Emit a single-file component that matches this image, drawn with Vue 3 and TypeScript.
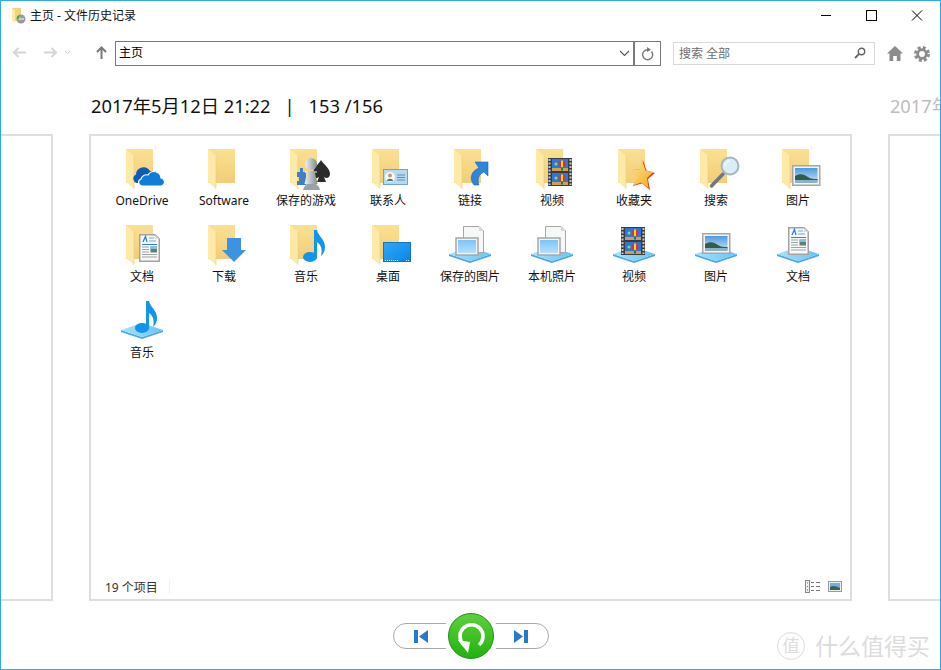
<script setup lang="ts">
// File History window: one restore point with a grid of library folders.
interface Item {
  label: string
  icon: string
  kind: 'folder' | 'library'
}

const items: Item[] = [
  { label: 'OneDrive', icon: 'cloud', kind: 'folder' },
  { label: 'Software', icon: '', kind: 'folder' },
  { label: '保存的游戏', icon: 'game', kind: 'folder' },
  { label: '联系人', icon: 'contact', kind: 'folder' },
  { label: '链接', icon: 'link', kind: 'folder' },
  { label: '视频', icon: 'film-f', kind: 'folder' },
  { label: '收藏夹', icon: 'star', kind: 'folder' },
  { label: '搜索', icon: 'lens', kind: 'folder' },
  { label: '图片', icon: 'pic-f', kind: 'folder' },
  { label: '文档', icon: 'doc-f', kind: 'folder' },
  { label: '下载', icon: 'down', kind: 'folder' },
  { label: '音乐', icon: 'note-f', kind: 'folder' },
  { label: '桌面', icon: 'desk', kind: 'folder' },
  { label: '保存的图片', icon: 'saved', kind: 'library' },
  { label: '本机照片', icon: 'saved', kind: 'library' },
  { label: '视频', icon: 'film-l', kind: 'library' },
  { label: '图片', icon: 'pic-l', kind: 'library' },
  { label: '文档', icon: 'doc-l', kind: 'library' },
  { label: '音乐', icon: 'note-l', kind: 'library' },
]
</script>

<template>
  <div class="window">
    <svg class="sprite" aria-hidden="true">
      <defs>
        <linearGradient id="fb" x1="0" y1="0" x2="0" y2="1">
          <stop offset="0" stop-color="#fae093" />
          <stop offset="1" stop-color="#f2cd78" />
        </linearGradient>
        <linearGradient id="plat" x1="0" y1="0" x2="1" y2="0">
          <stop offset="0" stop-color="#a8e2fc" />
          <stop offset="1" stop-color="#68c2f6" />
        </linearGradient>
        <linearGradient id="sky" x1="0" y1="0" x2="0" y2="1">
          <stop offset="0" stop-color="#4d9ae0" />
          <stop offset="1" stop-color="#cfe6f4" />
        </linearGradient>
        <linearGradient id="screen" x1="0" y1="0" x2="1" y2="1">
          <stop offset="0" stop-color="#2fa9f8" />
          <stop offset="1" stop-color="#0a84e6" />
        </linearGradient>
        <linearGradient id="photo" x1="0" y1="0" x2="0" y2="1">
          <stop offset="0" stop-color="#7cc4f8" />
          <stop offset="1" stop-color="#b6defc" />
        </linearGradient>
        <linearGradient id="gold" x1="0" y1="0" x2="1" y2="1">
          <stop offset="0" stop-color="#fde48f" />
          <stop offset="1" stop-color="#f5a623" />
        </linearGradient>
        <linearGradient id="pawn" x1="0" y1="0" x2="1" y2="0">
          <stop offset="0" stop-color="#eef1f2" />
          <stop offset="1" stop-color="#7e8b91" />
        </linearGradient>

        <g id="folder">
          <path d="M8 3H35V37H8Z" fill="url(#fb)" />
          <path d="M8 3L16 10V43L8 36Z" fill="#fdeaa8" />
          <path d="M16 10V43" stroke="#eccb7c" stroke-width=".6" />
        </g>

        <g id="cloud">
          <path d="M20 37a4.500 4.500 0 0 1-2-8.600a7.500 7.500 0 0 1 14-3.400h6v12Z" fill="#0a5cb8" />
          <path d="M24 40h18a4 4 0 0 0 1-8a7 7 0 0 0-13-3a5.500 5.500 0 0 0-7 4a3.600 3.600 0 0 0 1 7Z" fill="#0f7cdc" stroke="#fff" stroke-width="1.200" />
        </g>

        <g id="game">
          <path d="M15 26h3v-4h3v4h3v13h-9v-4h2v-4h-2Z" fill="#3f7fc4" />
          <path d="M39 14c2 4 9 8 9 14c0 4-4 5-6 3l2 5h-9l2-5c-2 2-6 1-6-3c0-6 6-10 8-14Z" fill="#2c2c2c" />
          <circle cx="29" cy="18" r="6" fill="url(#pawn)" />
          <path d="M23 25h12v2h-2l2.500 11h-13l2.500-11h-2Z" fill="url(#pawn)" />
          <path d="M21 44l1-3l3-3h9l3 3l1 3Z" fill="#97a3a9" />
        </g>

        <g id="contact">
          <rect x="19.500" y="23.500" width="24" height="15" fill="#b5daf0" stroke="#6ba6cc" />
          <circle cx="26" cy="31" r="5" fill="#f7f7f7" />
          <circle cx="26" cy="29.500" r="2" fill="#c89878" />
          <path d="M23 35c0-3 6-3 6 0Z" fill="#3f8060" />
          <path d="M33 29h8M33 31.500h8M33 34h8" stroke="#5f8fb0" />
        </g>

        <g id="link">
          <path d="M28 39C23 33 25 25 33 22L29 16H42V30L38 26C33 28 31 33 33 39Z" fill="#2f86d8" stroke="#1d65ae" stroke-width=".6" />
        </g>

        <g id="film">
          <rect width="24" height="28" fill="#3c3c3c" />
          <path d="M1.500 1v26M22.500 1v26" stroke="#c9c9c9" stroke-width="2" stroke-dasharray="2 1.500" />
          <rect x="4" y="1" width="16" height="12" fill="#2c78d8" />
          <rect x="4" y="15" width="16" height="12" fill="#2c78d8" />
          <rect x="4" y="10" width="16" height="3" fill="#c7a05e" />
          <rect x="4" y="24" width="16" height="3" fill="#c7a05e" />
          <circle cx="14" cy="6" r="3.500" fill="#d8332c" />
          <path d="M14 2.500v7" stroke="#f4d03a" stroke-width="2" />
          <path d="M14 9.500v3" stroke="#1f7a45" stroke-width="2" />
          <circle cx="14" cy="20" r="3.500" fill="#d8332c" />
          <path d="M14 16.500v7" stroke="#f4d03a" stroke-width="2" />
          <path d="M14 23.500v3" stroke="#1f7a45" stroke-width="2" />
          <circle cx="8" cy="6" r="1.500" fill="#8fd47a" />
          <circle cx="8" cy="20" r="1.500" fill="#8fd47a" />
        </g>
        <use id="film-f" href="#film" x="20" y="12" />
        <use id="film-l" href="#film" x="11" y="5" />

        <g id="star">
          <path d="M33 14l3.500 10.500L45 27l-7 6l2 11l-8-6.500l-9 2.500l4.500-9.500L22 24l8.500-.5Z" fill="#d9471a" />
          <path d="M32 14l3.500 10.500L43 26l-6 6l1.500 10L31 36.500l-8 3l3.500-9L22 24l7.500-.5Z" fill="url(#gold)" />
        </g>

        <g id="lens">
          <path d="M19.500 40L31 28" stroke="#71787d" stroke-width="3.500" stroke-linecap="round" />
          <circle cx="38" cy="20" r="8.500" fill="#d9eef8" stroke="#a6b6bf" stroke-width="2" />
          <path d="M33 20a5 5 0 0 1 5-5" stroke="#fff" fill="none" />
        </g>

        <g id="pic">
          <rect x=".75" y=".75" width="27" height="19.500" fill="#f4f4f4" stroke="#a6a6a6" stroke-width="1.500" />
          <rect x="3" y="3" width="22.500" height="15" fill="url(#sky)" />
          <path d="M3 11c5-3 9-2 13 1c3 2 6 2 9.500 2v2H3Z" fill="#2f5f4c" />
          <rect x="3" y="15" width="22.500" height="3" fill="#8cb2c8" />
        </g>
        <use id="pic-f" href="#pic" x="18" y="19" />
        <use id="pic-l" href="#pic" x="10" y="11" />

        <g id="doc">
          <path d="M.75 .75H16L20.250 5V27.250H.75Z" fill="#f8f8f8" stroke="#a3a3a3" stroke-width="1.500" />
          <path d="M16 .75V5H20.250Z" fill="#dcdcdc" />
          <path d="M4 8l2.500-5.500L8 8" fill="none" stroke="#2a86d6" stroke-width="1.300" />
          <path d="M10 4h5M10 7h7" stroke="#6ba9e0" />
          <path d="M3 10.500h15" stroke="#2a86d6" />
          <path d="M3 13h7M3 15.500h7M3 18h7M3 20.500h15M3 23h15" stroke="#9aa4aa" />
          <rect x="11.500" y="12.500" width="6.500" height="6" fill="#58836f" />
          <rect x="11.500" y="12.500" width="6.500" height="2.500" fill="#86bde6" />
        </g>
        <use id="doc-f" href="#doc" x="21" y="12" />
        <use id="doc-l" href="#doc" x="14" y="5" />

        <path id="down" d="M27 16H41V28H46L34 40L22 28H27Z" fill="#3d93e2" />

        <g id="note">
          <ellipse cx="28" cy="35" rx="7" ry="5" fill="#0f96ea" />
          <path d="M32 36V8h3c1 6 8 9 8 17c0 4-1.500 7-4 9c1-4 1-8-1-11c-1-1.500-2-2.500-3-3V36Z" fill="#0f96ea" />
        </g>
        <use id="note-f" href="#note" />
        <use id="note-l" href="#note" x="-4" y="-5" />

        <g id="desk">
          <rect x="19.500" y="20.500" width="27" height="19" fill="url(#screen)" stroke="#1576bd" />
          <path d="M21 38.500h13M42 38.500h3" stroke="#d8f0ff" stroke-dasharray="1 1" />
        </g>

        <g id="platform">
          <path d="M3 32L24 39L45 32V34L24 41L3 34Z" fill="#4aa8ea" />
          <path d="M3 32L24 25L45 32L24 39Z" fill="url(#plat)" />
        </g>

        <g id="saved">
          <path d="M17.500 4.500H33L37.500 9V30.500H17.500Z" fill="#f7f7f7" stroke="#a7a7a7" />
          <path d="M33 4.500V9H37.500Z" fill="#d9d9d9" />
          <rect x="10" y="16" width="22" height="17" fill="#f4f4f4" stroke="#a7a7a7" stroke-width="1.500" />
          <rect x="12" y="18" width="18" height="13" fill="url(#photo)" />
        </g>

        <path id="tb-arrow" d="M1 5.500H13M5.500 1L1 5.500L5.500 10" fill="none" stroke-width="2" />
      </defs>
    </svg>

    <header class="titlebar">
      <svg class="title-icon" width="15" height="16" viewBox="0 0 15 16">
        <path d="M1 0H10V13H1Z" fill="#f3d27f" />
        <path d="M1 0L4 2V15L1 13Z" fill="#fdeaa8" />
        <circle cx="10" cy="11" r="4.500" fill="#9a9a9a" />
        <path d="M7 11h6M7 11l2-2" stroke="#fff" stroke-width="1.200" fill="none" />
        <path d="M5.500 10.500a4.500 4.500 0 0 1 3-3.500v4Z" fill="#35a84a" />
      </svg>
      <span class="title-text">主页 - 文件历史记录</span>
      <div class="controls">
        <svg width="12" height="12" viewBox="0 0 12 12"><path d="M1 5.500H11" stroke="#000" /></svg>
        <svg width="12" height="12" viewBox="0 0 12 12"><rect x=".5" y=".5" width="10" height="10" fill="none" stroke="#000" /></svg>
        <svg width="12" height="12" viewBox="0 0 12 12"><path d="M1 .5L11 10.500M11 .5L1 10.500" stroke="#000" /></svg>
      </div>
    </header>

    <nav class="toolbar">
      <div class="nav-btns">
        <svg class="nav-back" width="14" height="11" viewBox="0 0 14 11"><use href="#tb-arrow" stroke="#d6d6d6" /></svg>
        <svg class="nav-fwd" width="14" height="11" viewBox="0 0 14 11"><use href="#tb-arrow" stroke="#d6d6d6" transform="matrix(-1 0 0 1 14 0)" /></svg>
        <svg class="nav-drop" width="7" height="5" viewBox="0 0 7 5"><path d="M1 1L3.500 3.500L6 1" fill="none" stroke="#d0d0d0" /></svg>
        <svg class="nav-up" width="11" height="13" viewBox="0 0 11 13"><path d="M5.500 13V2M1 6L5.500 1.500L10 6" fill="none" stroke="#7a7a7a" stroke-width="2" /></svg>
      </div>
      <div class="address">
        <span class="address-text">主页</span>
        <svg class="chevron" width="11" height="7" viewBox="0 0 11 7"><path d="M1 1L5.500 5.500L10 1" fill="none" stroke="#555" stroke-width="1.100" /></svg>
        <div class="refresh">
          <svg width="13" height="14" viewBox="0 0 13 14">
            <path d="M10.500 4.500a5 5 0 1 1-3.500-1.800" fill="none" stroke="#767676" stroke-width="1.400" />
            <path d="M6 0L10 2.700L6 5Z" fill="#767676" />
          </svg>
        </div>
      </div>
      <div class="search">
        <span>搜索 全部</span>
        <svg width="12" height="12" viewBox="0 0 12 12">
          <circle cx="7.500" cy="4.500" r="3.200" fill="none" stroke="#666" stroke-width="1.400" />
          <path d="M5 7L1 11" stroke="#666" stroke-width="1.800" />
        </svg>
      </div>
      <svg class="home" width="16" height="15" viewBox="0 0 16 15">
        <path d="M8 0L16 7.500H13.500V15H9.800V10H6.200V15H2.500V7.500H0Z" fill="#8c8c8c" />
      </svg>
      <svg class="gear" width="16" height="16" viewBox="0 0 16 16">
        <circle cx="8" cy="8" r="6.200" fill="none" stroke="#8c8c8c" stroke-width="3.600" stroke-dasharray="2.800 2.070" />
        <circle cx="8" cy="8" r="4.300" fill="none" stroke="#8c8c8c" stroke-width="2.800" />
      </svg>
    </nav>

    <div class="dates">
      <div class="date-current">2017年5月12日 21:22<span class="date-bar">|</span>153 /156</div>
      <div class="date-next">2017年5月</div>
    </div>

    <main class="stage">
      <div class="panel panel-side"></div>
      <section class="panel panel-main">
        <div class="grid">
          <div v-for="(item, i) in items" :key="i" class="cell">
            <svg class="icon" width="48" height="44" viewBox="0 0 48 44">
              <use v-if="item.kind === 'folder'" href="#folder" />
              <use v-else href="#platform" />
              <use v-if="item.icon" :href="'#' + item.icon" />
            </svg>
            <span class="label">{{ item.label }}</span>
          </div>
        </div>
        <footer class="status">
          <span class="count">19 个项目</span>
          <span class="sep"></span>
          <svg class="view-list" width="16" height="13" viewBox="0 0 16 13">
            <rect x=".5" y=".5" width="4" height="12" fill="#eee" stroke="#888" />
            <path d="M2 3h1M2 6.500h1" stroke="#3a7fc0" />
            <path d="M2 10h1" stroke="#c0392b" />
            <path d="M6 2.500h3M11 2.500h4M6 6.500h3M11 6.500h4M6 10.500h3M11 10.500h4" stroke="#777" />
          </svg>
          <svg width="14" height="11" viewBox="0 0 14 11">
            <rect x=".5" y=".5" width="13" height="10" fill="#eee" stroke="#999" />
            <rect x="2" y="2" width="10" height="7" fill="#6db0e6" />
            <path d="M2 6c3-2 6-1 10 1v2H2Z" fill="#3c6455" />
          </svg>
        </footer>
      </section>
      <div class="panel panel-side"></div>
    </main>

    <div class="pager">
      <button class="pill pill-left" type="button">
        <svg width="14" height="13" viewBox="0 0 14 13"><path d="M0 0H4V13H0ZM14 0V13L5 6.500Z" fill="#2a78c8" /></svg>
      </button>
      <button class="restore" type="button">
        <svg width="32" height="36" viewBox="0 0 32 36">
          <path d="M9 27A11.500 11.500 0 1 1 24 27" fill="none" stroke="#fff" stroke-width="3.600" />
          <path d="M3 22L13 35L15 24Z" fill="#fff" />
        </svg>
      </button>
      <button class="pill pill-right" type="button">
        <svg width="14" height="13" viewBox="0 0 14 13"><path d="M14 0H10V13H14ZM0 0V13L9 6.500Z" fill="#2a78c8" /></svg>
      </button>
    </div>

    <div class="watermark">
      <span class="wm-badge">值</span>
      <span>什么值得买</span>
    </div>
  </div>
</template>

<style>
html,
body {
  margin: 0;
  background: #fff;
}
</style>

<style scoped>
.window {
  position: relative;
  box-sizing: border-box;
  width: 941px;
  height: 670px;
  border: 1px solid #2ea8f2;
  background: #fff;
  color: #111;
  display: flex;
  flex-direction: column;
  overflow: hidden;
  font-family: "Noto Sans", "Noto Sans CJK SC", sans-serif;
  font-size: 12px;
}
.sprite {
  position: absolute;
  width: 0;
  height: 0;
}
.titlebar {
  height: 40px;
  flex: none;
  display: flex;
  align-items: flex-start;
  padding: 7px 0 0 10px;
  box-sizing: border-box;
}
.title-text {
  margin-left: 4px;
  line-height: 16px;
}
.controls {
  margin-left: auto;
  margin-top: 2px;
  margin-right: 17px;
  display: flex;
  gap: 33px;
}
.controls svg:first-child {
  margin-right: 1px;
}
.toolbar {
  height: 25px;
  flex: none;
  display: flex;
  align-items: center;
}
.nav-btns {
  width: 114px;
  flex: none;
  display: flex;
  align-items: center;
  padding-bottom: 2px;
  box-sizing: border-box;
}
.nav-back {
  margin-left: 12px;
}
.nav-fwd {
  margin-left: 16px;
}
.nav-drop {
  margin-left: 7px;
}
.nav-up {
  margin-left: 25px;
}
.address {
  width: 546px;
  height: 25px;
  flex: none;
  box-sizing: border-box;
  border: 1px solid #7a7a7a;
  display: flex;
  align-items: center;
  padding-left: 3px;
}
.address-text {
  flex: 1;
  color: #000;
  margin-top: -3px;
}
.chevron {
  margin-right: 3px;
}
.refresh {
  width: 27px;
  height: 100%;
  border-left: 2px solid #7a7a7a;
  display: flex;
  align-items: center;
  justify-content: center;
  box-sizing: border-box;
}
.search {
  margin-left: 12px;
  width: 202px;
  height: 23px;
  box-sizing: border-box;
  border: 1px solid #d9d9d9;
  display: flex;
  align-items: center;
  justify-content: space-between;
  padding: 0 8px 1px 5px;
  color: #6d6d6d;
}
.home {
  margin-left: 12px;
}
.gear {
  margin-left: 11px;
}
.dates {
  height: 68px;
  flex: none;
  display: flex;
  padding: 27px 0 0 90px;
  box-sizing: border-box;
  font-size: 18.300px;
  line-height: 26px;
  white-space: nowrap;
}
.date-bar {
  margin: 0 14px 0 14px;
}
.date-next {
  margin-left: 507px;
  color: #bdbdbd;
}
.stage {
  height: 467px;
  flex: none;
  display: grid;
  grid-template-columns: 52px 763px 1fr;
  column-gap: 36px;
}
.panel {
  box-sizing: border-box;
  border: 2px solid #dedede;
}
.panel-side:first-child {
  border-left: 0;
}
.panel-side:last-child {
  border-right: 0;
}
.panel-main {
  display: flex;
  flex-direction: column;
}
.grid {
  flex: 1;
  display: grid;
  grid-template-columns: repeat(9, 82px);
  grid-auto-rows: 76px;
  align-content: start;
  padding: 10px 0 0 10px;
}
.cell {
  display: flex;
  flex-direction: column;
  align-items: center;
}
.icon {
  display: block;
}
.label {
  line-height: 22px;
  white-space: nowrap;
}
.status {
  height: 24px;
  flex: none;
  display: flex;
  align-items: center;
  box-sizing: border-box;
  padding: 0 8px 1px 14px;
  color: #333;
}
.sep {
  width: 1px;
  height: 14px;
  margin-left: 11px;
  background: #f0f0f0;
}
.view-list {
  margin-left: auto;
  margin-right: 7px;
}
.pager {
  flex: 1;
  display: flex;
  align-items: center;
  justify-content: center;
  padding: 2px 0 0;
}
.pill {
  width: 66px;
  height: 26px;
  padding: 0;
  box-sizing: border-box;
  background: #fff;
  border: 1px solid #a9a9a9;
  display: flex;
  align-items: center;
}
.pill-left {
  border-radius: 13px 0 0 13px;
  padding-left: 20px;
  margin-right: -11px;
}
.pill-right {
  border-radius: 0 13px 13px 0;
  justify-content: flex-end;
  padding-right: 20px;
  margin-left: -11px;
}
.restore {
  position: relative;
  z-index: 1;
  width: 46px;
  height: 46px;
  padding: 0;
  box-sizing: border-box;
  border: 1px solid #1b8f10;
  border-radius: 50%;
  background: linear-gradient(#5fcf3f, #1fb40d);
  box-shadow: 0 0 0 5px #fff;
  display: flex;
  align-items: center;
  justify-content: center;
}
.watermark {
  position: absolute;
  right: 10px;
  bottom: 8px;
  display: flex;
  align-items: center;
  gap: 10px;
  font-size: 23px;
  line-height: 30px;
  color: #dcdcdc;
}
.wm-badge {
  width: 28px;
  height: 28px;
  box-sizing: border-box;
  border: 1px solid #dcdcdc;
  border-radius: 50%;
  font-size: 17px;
  line-height: 26px;
  text-align: center;
}
</style>
